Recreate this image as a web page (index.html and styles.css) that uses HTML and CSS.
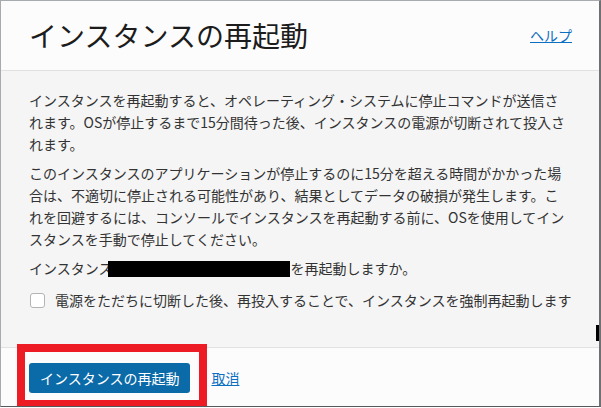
FILE: index.html
```html
<!DOCTYPE html>
<html lang="ja">
<head>
<meta charset="utf-8">
<title>インスタンスの再起動</title>
<link rel="stylesheet" href="styles.css">
</head>
<body>
<div class="dialog">
  <header class="dlg-header">
    <h1 class="dlg-title">インスタンスの再起動</h1>
    <a class="link help" href="#">ヘルプ</a>
  </header>
  <main class="dlg-body">
    <p class="para">インスタンスを再起動すると、オペレーティング・システムに停止コマンドが送信さ<br>れます。OSが停止するまで15分間待った後、インスタンスの電源が切断されて投入さ<br>れます。</p>
    <p class="para">このインスタンスのアプリケーションが停止するのに15分を超える時間がかかった場<br>合は、不適切に停止される可能性があり、結果としてデータの破損が発生します。こ<br>れを回避するには、コンソールでインスタンスを再起動する前に、OSを使用してイン<br>スタンスを手動で停止してください。</p>
    <p class="para">インスタンス<span class="redact"></span>を再起動しますか。</p>
    <label class="check-row">
      <span class="checkbox"></span>
      <span class="check-label">電源をただちに切断した後、再投入することで、インスタンスを強制再起動します</span>
    </label>
  </main>
  <footer class="dlg-footer">
    <button class="btn-primary" type="button">インスタンスの再起動</button>
    <a class="link cancel" href="#">取消</a>
  </footer>
  <div class="highlight"></div>
  <div class="edge-mark"></div>
</div>
</body>
</html>
```

FILE: styles.css
```css
html, body {
  margin: 0;
  padding: 0;
  background: #ffffff;
}

body {
  font-family: "Noto Sans CJK JP", "Noto Sans", sans-serif;
  color: #333333;
}

.dialog {
  position: relative;
  box-sizing: border-box;
  width: 601px;
  height: 407px;
  border-top: 1px solid #a7abb0;
  border-left: 1px solid #a7abb0;
  border-right: 2px solid #6e7073;
  border-bottom: 1px solid #55585c;
  display: flex;
  flex-direction: column;
  background: #fcfcfc;
  overflow: hidden;
}

.dlg-header {
  box-sizing: border-box;
  height: 70px;
  flex: 0 0 70px;
  padding: 0 27px 0 28px;
  display: flex;
  align-items: center;
  justify-content: space-between;
  border-bottom: 1px solid #e1e1e1;
  background: #fcfcfc;
}

.dlg-title {
  margin: 0;
  font-size: 28px;
  font-weight: 400;
  color: #1c1c1c;
  line-height: 40px;
  padding-bottom: 2px;
}

.link {
  color: #0d6fc2;
  text-decoration: underline;
  font-size: 14px;
}

.help {
  padding-bottom: 2px;
}

.dlg-body {
  flex: 1 1 auto;
  background: #f5f5f5;
  padding: 18px 28px 0 28px;
  font-size: 14px;
  line-height: 22px;
  border-bottom: 1px solid #e1e1e1;
}

.para {
  margin: 0 0 7px 0;
  white-space: nowrap;
}

.redact {
  display: inline-block;
  width: 182px;
  height: 16px;
  background: #000000;
  vertical-align: -3px;
  margin-left: -4px;
}

.check-row {
  display: flex;
  align-items: center;
  gap: 10px;
  margin-top: 10px;
  padding-left: 1px;
}

.checkbox {
  box-sizing: border-box;
  width: 15px;
  height: 15px;
  border: 1px solid #b4b4b4;
  border-radius: 3px;
  background: #ffffff;
  flex: 0 0 15px;
}

.check-label {
  white-space: nowrap;
  flex: 0 0 auto;
}

.dlg-footer {
  box-sizing: border-box;
  flex: 0 0 58px;
  height: 58px;
  padding-left: 28px;
  display: flex;
  align-items: center;
  gap: 21px;
  background: #fcfcfc;
}

.btn-primary {
  box-sizing: border-box;
  height: 30px;
  padding: 0 11px;
  border: none;
  border-radius: 3px;
  background: #0b6aa8;
  color: #ffffff;
  font-family: "Noto Sans CJK JP", "Noto Sans", sans-serif;
  font-size: 14px;
  line-height: 30px;
  margin-top: 1px;
}

.cancel {
  margin-top: 1px;
}

.highlight {
  position: absolute;
  left: 16px;
  top: 343px;
  width: 190px;
  height: 64px;
  box-sizing: border-box;
  border: 8px solid #ed1c24;
}

.edge-mark {
  position: absolute;
  right: 0;
  top: 324px;
  width: 3px;
  height: 16px;
  background: #000000;
}
```
